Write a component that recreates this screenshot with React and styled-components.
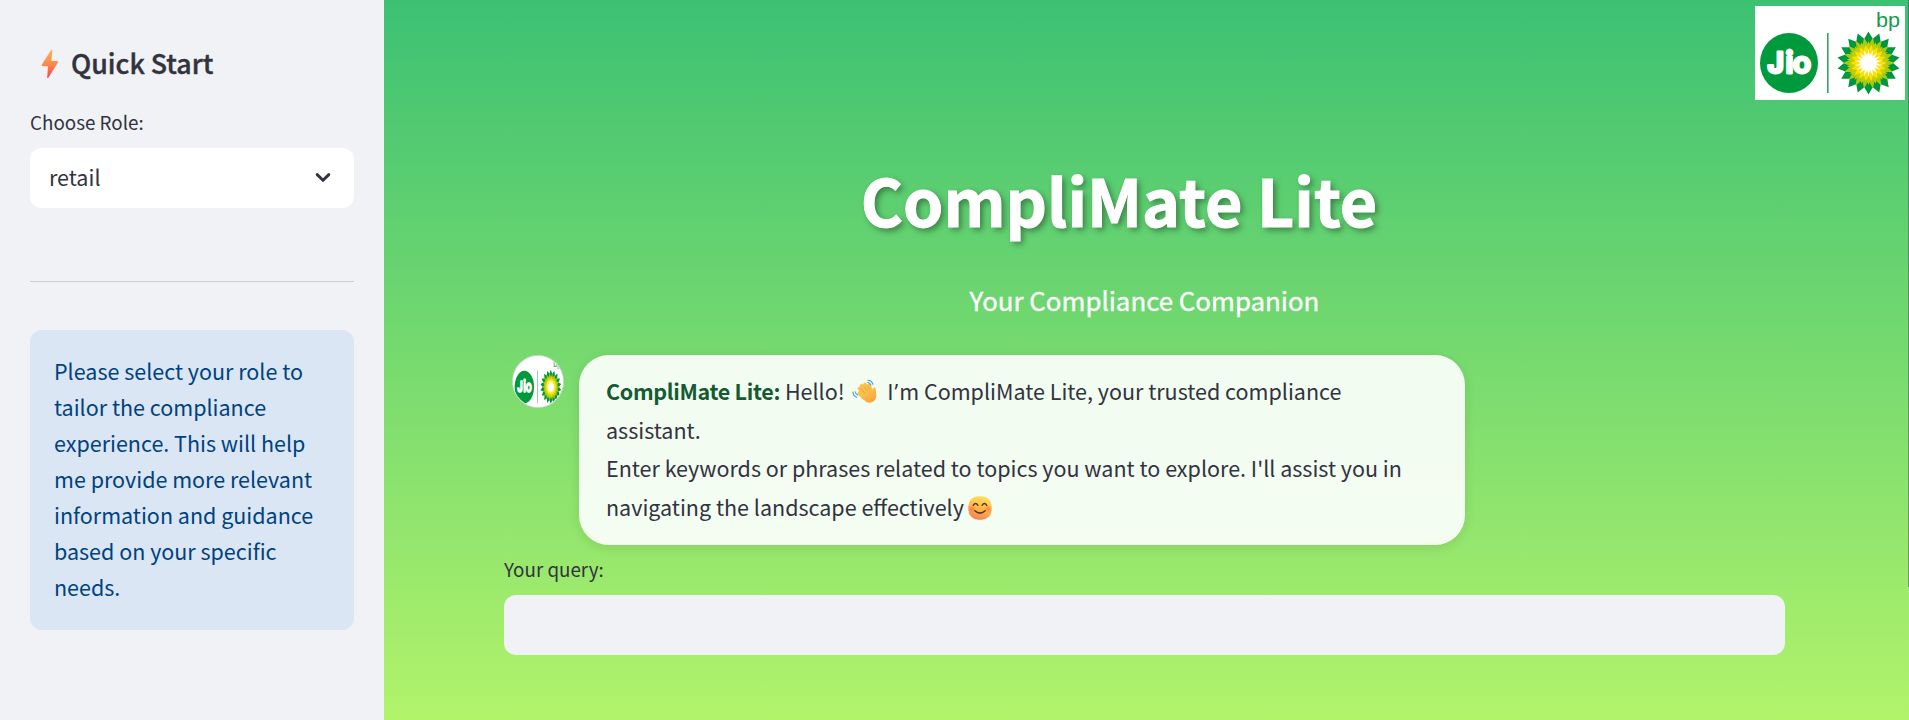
import React from "react";
import styled, { createGlobalStyle } from "styled-components";

const GlobalStyle = createGlobalStyle`
  *, *::before, *::after { box-sizing: border-box; }
  html, body { margin: 0; padding: 0; }
  body {
    font-family: "Noto Sans CJK SC", "Noto Sans", sans-serif;
    color: #31333f;
    overflow: hidden;
  }
`;

const Page = styled.div`
  display: flex;
  height: 720px;
  background: linear-gradient(to bottom, #3cc173 0%, #b2f36b 100%);
`;

const Sidebar = styled.aside`
  width: 384px;
  flex: none;
  height: 100%;
  padding: 39px 30px 0;
  background: #f0f2f6;
`;

const SidebarTitle = styled.h2`
  display: flex;
  align-items: center;
  gap: 12px;
  margin: 0;
  padding-left: 11px;
  height: 49px;
  font-size: 26.8px;
  font-weight: 500;
  line-height: 48px;
  span {
    padding-bottom: 1px;
    -webkit-text-stroke: 0.4px #31333f;
  }
`;

const FieldLabel = styled.label`
  display: block;
  height: 32px;
  margin-top: ${(p) => p.$top}px;
  font-size: 18.8px;
  line-height: 32px;
  white-space: nowrap;
`;

const Select = styled.div`
  display: flex;
  align-items: center;
  justify-content: space-between;
  height: 60px;
  margin-top: 10px;
  padding: 0 21px 4px 19px;
  border-radius: 12px;
  background: #fff;
  font-size: 21.5px;
`;

const Divider = styled.hr`
  height: 1px;
  margin: 73px 0 48px;
  border: 0;
  background: #cccdd3;
`;

const Alert = styled.div`
  height: 300px;
  padding: 23px 24px 0;
  border-radius: 12px;
  background: #dae6f4;
  color: #004280;
  font-size: 21.5px;
  line-height: 36px;
  white-space: nowrap;
`;

const Main = styled.main`
  position: relative;
  flex: 1;
  height: 100%;
  padding: 143px 124px 0 120px;
`;

const BrandLogo = styled.div`
  position: absolute;
  top: 6px;
  right: 4px;
  width: 150px;
  height: 94px;
  svg { display: block; }
`;

const ScrollEdge = styled.div`
  position: absolute;
  top: 0;
  right: 0;
  width: 1px;
  height: 587px;
  background: rgba(49, 51, 63, 0.4);
`;

const Title = styled.h1`
  margin: 0;
  height: 112px;
  padding-right: 51px;
  color: #fff;
  font-size: 64.5px;
  font-weight: 700;
  line-height: 112px;
  text-align: center;
  white-space: nowrap;
  -webkit-text-stroke: 1px #fff;
  text-shadow: 3px 3px 6px rgba(0, 0, 0, 0.4);
`;

const Subtitle = styled.p`
  margin: 22px 0 0;
  height: 47px;
  color: #fff;
  font-size: 25.85px;
  font-weight: 400;
  line-height: 46px;
  text-align: center;
  white-space: nowrap;
  -webkit-text-stroke: 0.35px #fff;
`;

const ChatRow = styled.div`
  display: flex;
  align-items: flex-start;
  gap: 15px;
  margin-top: 31px;
  padding-left: 8px;
`;

const Avatar = styled.div`
  width: 52px;
  height: 53px;
  flex: none;
  overflow: hidden;
  border: 1px solid #c9d6c9;
  border-radius: 50%;
  background: #fff;
  svg { display: block; }
`;

const Bubble = styled.div`
  width: 886px;
  height: 190px;
  padding: 17.3px 27px 0;
  border-radius: 30px;
  background: rgba(255, 255, 255, 0.9);
  box-shadow: 0 3px 12px rgba(0, 0, 0, 0.1);
  font-size: 21.5px;
  line-height: 38.4px;
  white-space: nowrap;
`;

const Speaker = styled.strong`
  color: #145a32;
  font-weight: 600;
  letter-spacing: -0.32px;
`;

const Apostrophe = styled.span`
  margin: 0 1px;
  font-family: "Open Sans", "Noto Sans", sans-serif;
  line-height: 1;
`;

const Emoji = styled.svg`
  display: inline-block;
  vertical-align: ${(p) => p.$drop || 0}px;
  margin: 0 ${(p) => p.$after || 0}px 0 ${(p) => p.$before || 0}px;
`;

const QueryInput = styled.input`
  display: block;
  width: 100%;
  height: 60px;
  margin-top: 10px;
  padding: 0 20px;
  border: 0;
  outline: 0;
  border-radius: 12px;
  background: #f0f2f6;
  font: inherit;
`;

function star(cx, cy, outer, inner, offset) {
  const pts = [];
  for (let i = 0; i < 36; i++) {
    const a = ((i * 10 + offset - 90) * Math.PI) / 180;
    const r = i % 2 ? inner : outer;
    pts.push(`${(cx + r * Math.cos(a)).toFixed(2)},${(cy + r * Math.sin(a)).toFixed(2)}`);
  }
  return pts.join(" ");
}

function JioBpLogo({ width, height }) {
  return (
    <svg width={width} height={height} viewBox="0 0 150 94" preserveAspectRatio="none">
      <rect width="150" height="94" fill="#fff" />
      <ellipse cx="34" cy="57" rx="29" ry="30" fill="#009a3d" />
      <text y="66.5" fontWeight="700" fill="#fff" stroke="#fff" strokeWidth="2.8" strokeLinejoin="round">
        <tspan x="12.6" fontFamily="Inter, sans-serif" fontSize="28">J</tspan>
        <tspan x="30.4 38" fontFamily="Lato, sans-serif" fontSize="31">io</tspan>
      </text>
      <rect x="72" y="27" width="1.6" height="60" fill="#37a561" />
      <text x="121" y="21" textLength="24" lengthAdjust="spacingAndGlyphs" fontFamily="Liberation Sans, sans-serif" fontSize="21" fill="#149b4b">bp</text>
      <polygon points={star(113.5, 57, 31.5, 24.5, 0)} fill="#009640" />
      <polygon points={star(113.5, 57, 26, 18, 10)} fill="#a8c813" />
      <polygon points={star(113.5, 57, 22, 15, 0)} fill="#c3d000" />
      <polygon points={star(113.5, 57, 18.5, 13, 10)} fill="#ffe000" />
      <polygon points={star(113.5, 57, 14, 7.5, 0)} fill="#fff" />
    </svg>
  );
}

function Bolt() {
  return (
    <svg width="18" height="30" viewBox="0 0 18 30">
      <defs>
        <linearGradient id="bolt" x1="0" y1="0" x2="0" y2="1">
          <stop offset="0" stopColor="#fcb34c" />
          <stop offset="0.5" stopColor="#fd8b4b" />
          <stop offset="1" stopColor="#f8454f" />
        </linearGradient>
      </defs>
      <path d="M10.4 .8Q11.6-.2 11.4 1.3L10.4 12H16Q17.8 12.2 16.8 13.8L7.4 28.8Q6.2 30 6.2 28.2L7 17.2H1.6Q.1 17 1 15.3Z" fill="url(#bolt)" />
    </svg>
  );
}

function Wave() {
  return (
    <Emoji width="25" height="25" viewBox="0 0 25 25" $drop={-4} $before={3} $after={5}>
      <defs>
        <linearGradient id="hand" x1="0" y1="0" x2=".7" y2="1">
          <stop offset="0" stopColor="#ffcf55" />
          <stop offset="1" stopColor="#f9a23b" />
        </linearGradient>
      </defs>
      <g stroke="#fdbf4c" strokeWidth="3.6" strokeLinecap="round">
        <path d="M12 15 7.4 9.4M14 13 9.6 6.7M16.5 12 13 5.5M19.5 12 17 6.5M12 19 7.3 14.2" />
      </g>
      <path d="M9 13 16.5 8.5 20.5 12Q20.8 9.2 22.3 8.2 24 8 23.8 11L24.4 16.5Q24 22 19 23.5 15.5 24.5 12.5 21.5L7.5 16.5Z" fill="url(#hand)" />
      <path d="m9.2 9.5 3.6 4.6M12 7.4l3.4 4.7M15.3 6.8l2.4 4" stroke="#e58b2b" strokeWidth=".6" fill="none" />
      <g stroke="#3d9bd8" strokeWidth="1.1" fill="none" strokeLinecap="round">
        <path d="M16 1.2q3.5 0 5 4M15.8 3.5q2.2.3 3 2.4M1 13q0 4 3.8 5.2M3.3 12.8q.3 2.3 2.5 3.2" />
      </g>
    </Emoji>
  );
}

function Smile() {
  return (
    <Emoji width="24" height="24" viewBox="0 0 24 24" $drop={-4} $before={4}>
      <defs>
        <linearGradient id="face" x1=".65" y1="0" x2=".4" y2="1">
          <stop offset="0" stopColor="#ffe05e" />
          <stop offset=".55" stopColor="#ffb63f" />
          <stop offset="1" stopColor="#f4805a" />
        </linearGradient>
        <radialGradient id="cheek">
          <stop offset="0" stopColor="#ff6b55" stopOpacity=".75" />
          <stop offset="1" stopColor="#ff6b55" stopOpacity="0" />
        </radialGradient>
      </defs>
      <rect x=".3" y=".3" width="23.4" height="23.4" rx="10" fill="url(#face)" />
      <circle cx="3.8" cy="13" r="4.2" fill="url(#cheek)" />
      <circle cx="20.2" cy="13" r="4.2" fill="url(#cheek)" />
      <path d="M5.3 9.3q2.2-3.6 4.6 0M14.1 9.3q2.4-3.6 4.6 0M6.8 14.8q5.2 4.6 10.4 0" fill="none" stroke="#5b3436" strokeWidth="1.5" strokeLinecap="round" />
    </Emoji>
  );
}

export default function App() {
  return (
    <>
      <GlobalStyle />
      <Page>
        <Sidebar>
          <SidebarTitle>
            <Bolt />
            <span>Quick Start</span>
          </SidebarTitle>
          <FieldLabel $top={18}>Choose Role:</FieldLabel>
          <Select>
            <span>retail</span>
            <svg width="20" height="20" viewBox="0 0 20 20">
              <path d="m4.2 8.6 5.8 5.6 5.8-5.6" fill="none" stroke="#31333f" strokeWidth="2.9" strokeLinecap="round" />
            </svg>
          </Select>
          <Divider />
          <Alert>
            Please select your role to<br />
            tailor the compliance<br />
            experience. This will help<br />
            me provide more relevant<br />
            information and guidance<br />
            based on your specific<br />
            needs.
          </Alert>
        </Sidebar>
        <Main>
          <Title>CompliMate Lite</Title>
          <Subtitle>Your Compliance Companion</Subtitle>
          <ChatRow>
            <Avatar>
              <JioBpLogo width={50} height={51} />
            </Avatar>
            <Bubble>
              <Speaker>CompliMate Lite:</Speaker> Hello! <Wave /> I<Apostrophe>’</Apostrophe>m CompliMate Lite, your trusted compliance<br />
              assistant.<br />
              Enter keywords or phrases related to topics you want to explore. I'll assist you in<br />
              navigating the landscape effectively<Smile />
            </Bubble>
          </ChatRow>
          <FieldLabel htmlFor="query" $top={8}>Your query:</FieldLabel>
          <QueryInput id="query" type="text" />
          <BrandLogo>
            <JioBpLogo width={150} height={94} />
          </BrandLogo>
          <ScrollEdge />
        </Main>
      </Page>
    </>
  );
}
